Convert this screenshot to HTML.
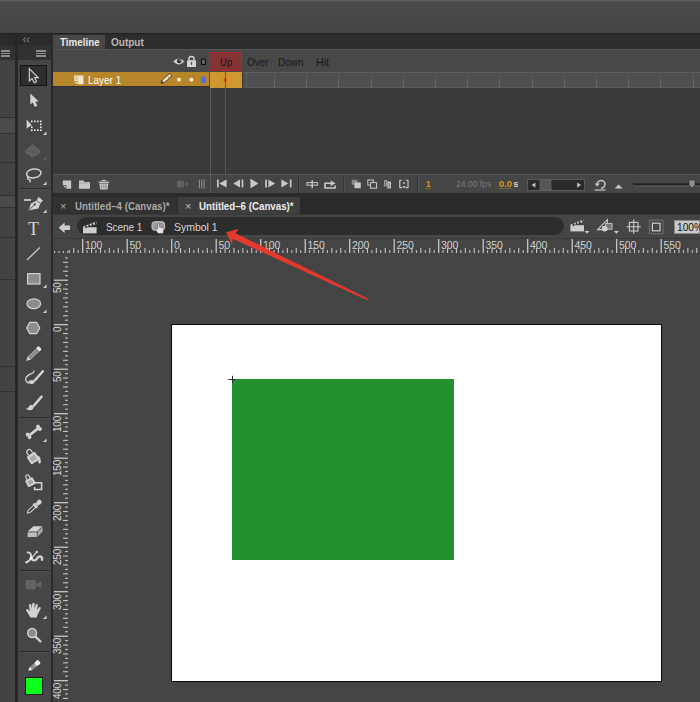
<!DOCTYPE html>
<html><head><meta charset="utf-8">
<style>
*{margin:0;padding:0;box-sizing:border-box}
html,body{width:700px;height:702px;overflow:hidden;background:#444;font-family:"Liberation Sans",sans-serif;}
#app{position:relative;width:700px;height:702px;overflow:hidden;background:#444444}
.abs{position:absolute}
.t{position:absolute;white-space:nowrap;font-family:"Liberation Sans",sans-serif;font-size:11px;line-height:12px;color:#ddd}
svg{position:absolute;overflow:visible}
</style></head><body>
<div id="app">
<div class="abs" style="left:0px;top:0px;width:700px;height:34px;background:linear-gradient(#4b4b4b,#434343);"></div>
<div class="abs" style="left:0px;top:0px;width:700px;height:1px;background:#5c5c5c;"></div>
<div class="abs" style="left:0px;top:1px;width:700px;height:1px;background:#4e4e4e;"></div>
<div class="abs" style="left:0px;top:33.2px;width:700px;height:16.8px;background:#2c2c2c;"></div>
<div class="abs" style="left:0px;top:33.2px;width:700px;height:1.3px;background:#222;"></div>
<div class="abs" style="left:0px;top:34px;width:15px;height:11px;background:#2a2a2a;"></div>
<div class="abs" style="left:0px;top:45px;width:15px;height:15px;background:#313131;"></div>
<div class="abs" style="left:0px;top:60px;width:15px;height:642px;background:#434343;"></div>
<div class="abs" style="left:15px;top:34px;width:3px;height:668px;background:#272727;"></div>
<div class="abs" style="left:18px;top:34px;width:33px;height:11px;background:#2a2a2a;"></div>
<div class="abs" style="left:18px;top:45px;width:33px;height:15px;background:#313131;"></div>
<div class="abs" style="left:18px;top:60px;width:33px;height:642px;background:#464646;"></div>
<div class="abs" style="left:51px;top:34px;width:2px;height:668px;background:#2a2a2a;"></div>
<div class="abs" style="left:53px;top:35px;width:647px;height:14px;background:#2e2e2e;"></div>
<div class="abs" style="left:53px;top:35px;width:52px;height:15px;background:#484848;"></div>
<div class="abs" style="left:105px;top:35px;width:45px;height:14px;background:#2d2d2d;"></div>
<div class="abs" style="left:53px;top:49px;width:647px;height:23px;background:#484848;"></div>
<div class="abs" style="left:53px;top:49.4px;width:647px;height:1px;background:#525252;"></div>
<div class="abs" style="left:53px;top:72px;width:647px;height:102px;background:#3a3a3a;"></div>
<div class="abs" style="left:53px;top:174px;width:647px;height:1px;background:#565656;"></div>
<div class="abs" style="left:53px;top:175px;width:647px;height:18px;background:#454545;"></div>
<div class="abs" style="left:53px;top:193px;width:647px;height:4px;background:#2a2a2a;"></div>
<div class="abs" style="left:53px;top:197px;width:647px;height:17px;background:#2a2a2a;"></div>
<div class="abs" style="left:53px;top:197px;width:124px;height:17px;background:#323232;"></div>
<div class="abs" style="left:178px;top:197px;width:122px;height:17px;background:#3e3e3e;"></div>
<div class="abs" style="left:53px;top:214px;width:647px;height:1px;background:#383838;"></div>
<div class="abs" style="left:53px;top:214.5px;width:647px;height:23.5px;background:#454545;"></div>
<div class="abs" style="left:77px;top:217.3px;width:487px;height:17.8px;background:#2d2d2d;border-radius:9px;"></div>
<div class="abs" style="left:53px;top:238px;width:647px;height:1px;background:#3a3a3a;"></div>
<div class="t" style="left:59.8px;top:36.2px;font-size:10.5px;color:#e8e8e8;font-weight:bold;transform:scaleX(0.9335);transform-origin:0 0;">Timeline</div>
<div class="t" style="left:111px;top:36.2px;font-size:10.5px;color:#b8b8b8;font-weight:bold;transform:scaleX(0.9537);transform-origin:0 0;">Output</div>
<div class="abs" style="left:209px;top:52px;width:33px;height:19px;background:rgba(170,40,40,0.62);border:1px solid #a82a2a;"></div>
<div class="t" style="left:220px;top:56px;font-size:10.5px;color:#1c1010;font-weight:normal;transform:scaleX(0.9090);transform-origin:0 0;">Up</div>
<div class="t" style="left:247.3px;top:56px;font-size:10.5px;color:#161616;font-weight:normal;transform:scaleX(0.9400);transform-origin:0 0;">Over</div>
<div class="t" style="left:277.6px;top:56px;font-size:10.5px;color:#161616;font-weight:normal;transform:scaleX(0.9574);transform-origin:0 0;">Down</div>
<div class="t" style="left:316px;top:56px;font-size:10.5px;color:#161616;font-weight:normal;transform:scaleX(1.0134);transform-origin:0 0;">Hit</div>
<div class="abs" style="left:53px;top:72px;width:157px;height:14px;background:#b68629;"></div>
<div class="abs" style="left:210px;top:72px;width:32px;height:15.5px;background:#d0992f;"></div>
<div class="abs" style="left:243px;top:72px;width:457px;height:15.5px;background:#4f4f4f;"></div>
<div class="abs" style="left:243px;top:72px;width:457px;height:1px;background:#5f5f5f;"></div>
<div class="abs" style="left:243px;top:87px;width:457px;height:1px;background:#5a5a5a;"></div>
<div class="abs" style="left:246px;top:72px;width:1px;height:15px;background:#606060;"></div>
<div class="abs" style="left:274px;top:79px;width:1px;height:8px;background:#686868;"></div>
<div class="abs" style="left:274px;top:73px;width:1px;height:6px;background:#585858;"></div>
<div class="abs" style="left:306px;top:79px;width:1px;height:8px;background:#686868;"></div>
<div class="abs" style="left:306px;top:73px;width:1px;height:6px;background:#585858;"></div>
<div class="abs" style="left:338px;top:79px;width:1px;height:8px;background:#686868;"></div>
<div class="abs" style="left:338px;top:73px;width:1px;height:6px;background:#585858;"></div>
<div class="abs" style="left:371px;top:79px;width:1px;height:8px;background:#686868;"></div>
<div class="abs" style="left:371px;top:73px;width:1px;height:6px;background:#585858;"></div>
<div class="abs" style="left:403px;top:79px;width:1px;height:8px;background:#686868;"></div>
<div class="abs" style="left:403px;top:73px;width:1px;height:6px;background:#585858;"></div>
<div class="abs" style="left:435px;top:79px;width:1px;height:8px;background:#686868;"></div>
<div class="abs" style="left:435px;top:73px;width:1px;height:6px;background:#585858;"></div>
<div class="abs" style="left:467px;top:79px;width:1px;height:8px;background:#686868;"></div>
<div class="abs" style="left:467px;top:73px;width:1px;height:6px;background:#585858;"></div>
<div class="abs" style="left:499px;top:79px;width:1px;height:8px;background:#686868;"></div>
<div class="abs" style="left:499px;top:73px;width:1px;height:6px;background:#585858;"></div>
<div class="abs" style="left:532px;top:79px;width:1px;height:8px;background:#686868;"></div>
<div class="abs" style="left:532px;top:73px;width:1px;height:6px;background:#585858;"></div>
<div class="abs" style="left:564px;top:79px;width:1px;height:8px;background:#686868;"></div>
<div class="abs" style="left:564px;top:73px;width:1px;height:6px;background:#585858;"></div>
<div class="abs" style="left:596px;top:79px;width:1px;height:8px;background:#686868;"></div>
<div class="abs" style="left:596px;top:73px;width:1px;height:6px;background:#585858;"></div>
<div class="abs" style="left:628px;top:79px;width:1px;height:8px;background:#686868;"></div>
<div class="abs" style="left:628px;top:73px;width:1px;height:6px;background:#585858;"></div>
<div class="abs" style="left:660px;top:79px;width:1px;height:8px;background:#686868;"></div>
<div class="abs" style="left:660px;top:73px;width:1px;height:6px;background:#585858;"></div>
<div class="abs" style="left:693px;top:79px;width:1px;height:8px;background:#686868;"></div>
<div class="abs" style="left:693px;top:73px;width:1px;height:6px;background:#585858;"></div>
<div class="abs" style="left:53px;top:86px;width:157px;height:1px;background:#303030;"></div>
<div class="abs" style="left:209px;top:72px;width:1px;height:14px;background:#6a4a14;"></div>
<div class="t" style="left:88.4px;top:74px;font-size:10.5px;color:#ffffff;font-weight:normal;transform:scaleX(0.9473);transform-origin:0 0;">Layer 1</div>
<div class="abs" style="left:210px;top:88px;width:1px;height:105px;background:#5a5a5a;"></div>
<div class="abs" style="left:224.5px;top:71px;width:1.5px;height:104px;background:#d0261c;"></div>
<div class="t" style="left:60px;top:200px;font-size:11px;color:#aaa;font-weight:normal;">&#215;</div>
<div class="t" style="left:75px;top:200px;font-size:10.5px;color:#a8a8a8;font-weight:bold;transform:scaleX(0.9252);transform-origin:0 0;">Untitled&#8211;4 (Canvas)*</div>
<div class="t" style="left:185px;top:200px;font-size:11px;color:#bbb;font-weight:normal;">&#215;</div>
<div class="t" style="left:198.6px;top:200px;font-size:10.5px;color:#ececec;font-weight:bold;transform:scaleX(0.9262);transform-origin:0 0;">Untitled&#8211;6 (Canvas)*</div>
<div class="t" style="left:105.6px;top:221px;font-size:10.5px;color:#d8d8d8;font-weight:normal;transform:scaleX(0.9443);transform-origin:0 0;">Scene 1</div>
<div class="t" style="left:174.3px;top:221px;font-size:10.5px;color:#d8d8d8;font-weight:normal;transform:scaleX(0.9981);transform-origin:0 0;">Symbol 1</div>
<div class="abs" style="left:674px;top:220px;width:26px;height:14px;background:#c9c9c9;border:1px solid #8a8a8a;"></div>
<div class="t" style="left:677px;top:221px;font-size:11px;color:#111;font-weight:normal;transform:scaleX(0.9234);transform-origin:0 0;">100%</div>
<div class="t" style="left:426.2px;top:177.8px;font-size:9.5px;color:#d99a20;font-weight:bold;transform:scaleX(0.8710);transform-origin:0 0;">1</div>
<div class="t" style="left:456px;top:177.8px;font-size:9px;color:#7c7c7c;font-weight:normal;transform:scaleX(0.9514);transform-origin:0 0;">24.00 fps</div>
<div class="t" style="left:498.9px;top:177.8px;font-size:9.5px;color:#d99a20;font-weight:bold;transform:scaleX(0.9846);transform-origin:0 0;">0.0</div>
<div class="t" style="left:513.4px;top:178px;font-size:8.5px;color:#d8d8d8;font-weight:bold;">s</div>
<svg style="left:0px;top:0px;" width="700" height="702" viewBox="0 0 700 702"><rect x="68.75" y="250" width="1.1" height="3" fill="#bdbdbd"/><rect x="73.20" y="248" width="1.1" height="5" fill="#c4c4c4"/><rect x="77.65" y="250" width="1.1" height="3" fill="#bdbdbd"/><rect x="82.10" y="239" width="1.2" height="14" fill="#d0d0d0"/><rect x="86.55" y="250" width="1.1" height="3" fill="#bdbdbd"/><rect x="91.00" y="248" width="1.1" height="5" fill="#c4c4c4"/><rect x="95.45" y="250" width="1.1" height="3" fill="#bdbdbd"/><rect x="99.90" y="248" width="1.1" height="5" fill="#c4c4c4"/><rect x="104.35" y="250" width="1.1" height="3" fill="#bdbdbd"/><rect x="108.80" y="248" width="1.1" height="5" fill="#c4c4c4"/><rect x="113.25" y="250" width="1.1" height="3" fill="#bdbdbd"/><rect x="117.70" y="248" width="1.1" height="5" fill="#c4c4c4"/><rect x="122.15" y="250" width="1.1" height="3" fill="#bdbdbd"/><rect x="126.60" y="239" width="1.2" height="14" fill="#d0d0d0"/><rect x="131.05" y="250" width="1.1" height="3" fill="#bdbdbd"/><rect x="135.50" y="248" width="1.1" height="5" fill="#c4c4c4"/><rect x="139.95" y="250" width="1.1" height="3" fill="#bdbdbd"/><rect x="144.40" y="248" width="1.1" height="5" fill="#c4c4c4"/><rect x="148.85" y="250" width="1.1" height="3" fill="#bdbdbd"/><rect x="153.30" y="248" width="1.1" height="5" fill="#c4c4c4"/><rect x="157.75" y="250" width="1.1" height="3" fill="#bdbdbd"/><rect x="162.20" y="248" width="1.1" height="5" fill="#c4c4c4"/><rect x="166.65" y="250" width="1.1" height="3" fill="#bdbdbd"/><rect x="171.10" y="239" width="1.2" height="14" fill="#d0d0d0"/><rect x="175.55" y="250" width="1.1" height="3" fill="#bdbdbd"/><rect x="180.00" y="248" width="1.1" height="5" fill="#c4c4c4"/><rect x="184.45" y="250" width="1.1" height="3" fill="#bdbdbd"/><rect x="188.90" y="248" width="1.1" height="5" fill="#c4c4c4"/><rect x="193.35" y="250" width="1.1" height="3" fill="#bdbdbd"/><rect x="197.80" y="248" width="1.1" height="5" fill="#c4c4c4"/><rect x="202.25" y="250" width="1.1" height="3" fill="#bdbdbd"/><rect x="206.70" y="248" width="1.1" height="5" fill="#c4c4c4"/><rect x="211.15" y="250" width="1.1" height="3" fill="#bdbdbd"/><rect x="215.60" y="239" width="1.2" height="14" fill="#d0d0d0"/><rect x="220.05" y="250" width="1.1" height="3" fill="#bdbdbd"/><rect x="224.50" y="248" width="1.1" height="5" fill="#c4c4c4"/><rect x="228.95" y="250" width="1.1" height="3" fill="#bdbdbd"/><rect x="233.40" y="248" width="1.1" height="5" fill="#c4c4c4"/><rect x="237.85" y="250" width="1.1" height="3" fill="#bdbdbd"/><rect x="242.30" y="248" width="1.1" height="5" fill="#c4c4c4"/><rect x="246.75" y="250" width="1.1" height="3" fill="#bdbdbd"/><rect x="251.20" y="248" width="1.1" height="5" fill="#c4c4c4"/><rect x="255.65" y="250" width="1.1" height="3" fill="#bdbdbd"/><rect x="260.10" y="239" width="1.2" height="14" fill="#d0d0d0"/><rect x="264.55" y="250" width="1.1" height="3" fill="#bdbdbd"/><rect x="269.00" y="248" width="1.1" height="5" fill="#c4c4c4"/><rect x="273.45" y="250" width="1.1" height="3" fill="#bdbdbd"/><rect x="277.90" y="248" width="1.1" height="5" fill="#c4c4c4"/><rect x="282.35" y="250" width="1.1" height="3" fill="#bdbdbd"/><rect x="286.80" y="248" width="1.1" height="5" fill="#c4c4c4"/><rect x="291.25" y="250" width="1.1" height="3" fill="#bdbdbd"/><rect x="295.70" y="248" width="1.1" height="5" fill="#c4c4c4"/><rect x="300.15" y="250" width="1.1" height="3" fill="#bdbdbd"/><rect x="304.60" y="239" width="1.2" height="14" fill="#d0d0d0"/><rect x="309.05" y="250" width="1.1" height="3" fill="#bdbdbd"/><rect x="313.50" y="248" width="1.1" height="5" fill="#c4c4c4"/><rect x="317.95" y="250" width="1.1" height="3" fill="#bdbdbd"/><rect x="322.40" y="248" width="1.1" height="5" fill="#c4c4c4"/><rect x="326.85" y="250" width="1.1" height="3" fill="#bdbdbd"/><rect x="331.30" y="248" width="1.1" height="5" fill="#c4c4c4"/><rect x="335.75" y="250" width="1.1" height="3" fill="#bdbdbd"/><rect x="340.20" y="248" width="1.1" height="5" fill="#c4c4c4"/><rect x="344.65" y="250" width="1.1" height="3" fill="#bdbdbd"/><rect x="349.10" y="239" width="1.2" height="14" fill="#d0d0d0"/><rect x="353.55" y="250" width="1.1" height="3" fill="#bdbdbd"/><rect x="358.00" y="248" width="1.1" height="5" fill="#c4c4c4"/><rect x="362.45" y="250" width="1.1" height="3" fill="#bdbdbd"/><rect x="366.90" y="248" width="1.1" height="5" fill="#c4c4c4"/><rect x="371.35" y="250" width="1.1" height="3" fill="#bdbdbd"/><rect x="375.80" y="248" width="1.1" height="5" fill="#c4c4c4"/><rect x="380.25" y="250" width="1.1" height="3" fill="#bdbdbd"/><rect x="384.70" y="248" width="1.1" height="5" fill="#c4c4c4"/><rect x="389.15" y="250" width="1.1" height="3" fill="#bdbdbd"/><rect x="393.60" y="239" width="1.2" height="14" fill="#d0d0d0"/><rect x="398.05" y="250" width="1.1" height="3" fill="#bdbdbd"/><rect x="402.50" y="248" width="1.1" height="5" fill="#c4c4c4"/><rect x="406.95" y="250" width="1.1" height="3" fill="#bdbdbd"/><rect x="411.40" y="248" width="1.1" height="5" fill="#c4c4c4"/><rect x="415.85" y="250" width="1.1" height="3" fill="#bdbdbd"/><rect x="420.30" y="248" width="1.1" height="5" fill="#c4c4c4"/><rect x="424.75" y="250" width="1.1" height="3" fill="#bdbdbd"/><rect x="429.20" y="248" width="1.1" height="5" fill="#c4c4c4"/><rect x="433.65" y="250" width="1.1" height="3" fill="#bdbdbd"/><rect x="438.10" y="239" width="1.2" height="14" fill="#d0d0d0"/><rect x="442.55" y="250" width="1.1" height="3" fill="#bdbdbd"/><rect x="447.00" y="248" width="1.1" height="5" fill="#c4c4c4"/><rect x="451.45" y="250" width="1.1" height="3" fill="#bdbdbd"/><rect x="455.90" y="248" width="1.1" height="5" fill="#c4c4c4"/><rect x="460.35" y="250" width="1.1" height="3" fill="#bdbdbd"/><rect x="464.80" y="248" width="1.1" height="5" fill="#c4c4c4"/><rect x="469.25" y="250" width="1.1" height="3" fill="#bdbdbd"/><rect x="473.70" y="248" width="1.1" height="5" fill="#c4c4c4"/><rect x="478.15" y="250" width="1.1" height="3" fill="#bdbdbd"/><rect x="482.60" y="239" width="1.2" height="14" fill="#d0d0d0"/><rect x="487.05" y="250" width="1.1" height="3" fill="#bdbdbd"/><rect x="491.50" y="248" width="1.1" height="5" fill="#c4c4c4"/><rect x="495.95" y="250" width="1.1" height="3" fill="#bdbdbd"/><rect x="500.40" y="248" width="1.1" height="5" fill="#c4c4c4"/><rect x="504.85" y="250" width="1.1" height="3" fill="#bdbdbd"/><rect x="509.30" y="248" width="1.1" height="5" fill="#c4c4c4"/><rect x="513.75" y="250" width="1.1" height="3" fill="#bdbdbd"/><rect x="518.20" y="248" width="1.1" height="5" fill="#c4c4c4"/><rect x="522.65" y="250" width="1.1" height="3" fill="#bdbdbd"/><rect x="527.10" y="239" width="1.2" height="14" fill="#d0d0d0"/><rect x="531.55" y="250" width="1.1" height="3" fill="#bdbdbd"/><rect x="536.00" y="248" width="1.1" height="5" fill="#c4c4c4"/><rect x="540.45" y="250" width="1.1" height="3" fill="#bdbdbd"/><rect x="544.90" y="248" width="1.1" height="5" fill="#c4c4c4"/><rect x="549.35" y="250" width="1.1" height="3" fill="#bdbdbd"/><rect x="553.80" y="248" width="1.1" height="5" fill="#c4c4c4"/><rect x="558.25" y="250" width="1.1" height="3" fill="#bdbdbd"/><rect x="562.70" y="248" width="1.1" height="5" fill="#c4c4c4"/><rect x="567.15" y="250" width="1.1" height="3" fill="#bdbdbd"/><rect x="571.60" y="239" width="1.2" height="14" fill="#d0d0d0"/><rect x="576.05" y="250" width="1.1" height="3" fill="#bdbdbd"/><rect x="580.50" y="248" width="1.1" height="5" fill="#c4c4c4"/><rect x="584.95" y="250" width="1.1" height="3" fill="#bdbdbd"/><rect x="589.40" y="248" width="1.1" height="5" fill="#c4c4c4"/><rect x="593.85" y="250" width="1.1" height="3" fill="#bdbdbd"/><rect x="598.30" y="248" width="1.1" height="5" fill="#c4c4c4"/><rect x="602.75" y="250" width="1.1" height="3" fill="#bdbdbd"/><rect x="607.20" y="248" width="1.1" height="5" fill="#c4c4c4"/><rect x="611.65" y="250" width="1.1" height="3" fill="#bdbdbd"/><rect x="616.10" y="239" width="1.2" height="14" fill="#d0d0d0"/><rect x="620.55" y="250" width="1.1" height="3" fill="#bdbdbd"/><rect x="625.00" y="248" width="1.1" height="5" fill="#c4c4c4"/><rect x="629.45" y="250" width="1.1" height="3" fill="#bdbdbd"/><rect x="633.90" y="248" width="1.1" height="5" fill="#c4c4c4"/><rect x="638.35" y="250" width="1.1" height="3" fill="#bdbdbd"/><rect x="642.80" y="248" width="1.1" height="5" fill="#c4c4c4"/><rect x="647.25" y="250" width="1.1" height="3" fill="#bdbdbd"/><rect x="651.70" y="248" width="1.1" height="5" fill="#c4c4c4"/><rect x="656.15" y="250" width="1.1" height="3" fill="#bdbdbd"/><rect x="660.60" y="239" width="1.2" height="14" fill="#d0d0d0"/><rect x="665.05" y="250" width="1.1" height="3" fill="#bdbdbd"/><rect x="669.50" y="248" width="1.1" height="5" fill="#c4c4c4"/><rect x="673.95" y="250" width="1.1" height="3" fill="#bdbdbd"/><rect x="678.40" y="248" width="1.1" height="5" fill="#c4c4c4"/><rect x="682.85" y="250" width="1.1" height="3" fill="#bdbdbd"/><rect x="687.30" y="248" width="1.1" height="5" fill="#c4c4c4"/><rect x="691.75" y="250" width="1.1" height="3" fill="#bdbdbd"/><rect x="696.20" y="248" width="1.1" height="5" fill="#c4c4c4"/><rect x="700.65" y="250" width="1.1" height="3" fill="#bdbdbd"/><rect x="65" y="257.35" width="3" height="1.1" fill="#bdbdbd"/><rect x="63" y="261.80" width="5" height="1.1" fill="#c4c4c4"/><rect x="65" y="266.25" width="3" height="1.1" fill="#bdbdbd"/><rect x="63" y="270.70" width="5" height="1.1" fill="#c4c4c4"/><rect x="65" y="275.15" width="3" height="1.1" fill="#bdbdbd"/><rect x="54" y="279.60" width="14" height="1.2" fill="#d0d0d0"/><rect x="65" y="284.05" width="3" height="1.1" fill="#bdbdbd"/><rect x="63" y="288.50" width="5" height="1.1" fill="#c4c4c4"/><rect x="65" y="292.95" width="3" height="1.1" fill="#bdbdbd"/><rect x="63" y="297.40" width="5" height="1.1" fill="#c4c4c4"/><rect x="65" y="301.85" width="3" height="1.1" fill="#bdbdbd"/><rect x="63" y="306.30" width="5" height="1.1" fill="#c4c4c4"/><rect x="65" y="310.75" width="3" height="1.1" fill="#bdbdbd"/><rect x="63" y="315.20" width="5" height="1.1" fill="#c4c4c4"/><rect x="65" y="319.65" width="3" height="1.1" fill="#bdbdbd"/><rect x="54" y="324.10" width="14" height="1.2" fill="#d0d0d0"/><rect x="65" y="328.55" width="3" height="1.1" fill="#bdbdbd"/><rect x="63" y="333.00" width="5" height="1.1" fill="#c4c4c4"/><rect x="65" y="337.45" width="3" height="1.1" fill="#bdbdbd"/><rect x="63" y="341.90" width="5" height="1.1" fill="#c4c4c4"/><rect x="65" y="346.35" width="3" height="1.1" fill="#bdbdbd"/><rect x="63" y="350.80" width="5" height="1.1" fill="#c4c4c4"/><rect x="65" y="355.25" width="3" height="1.1" fill="#bdbdbd"/><rect x="63" y="359.70" width="5" height="1.1" fill="#c4c4c4"/><rect x="65" y="364.15" width="3" height="1.1" fill="#bdbdbd"/><rect x="54" y="368.60" width="14" height="1.2" fill="#d0d0d0"/><rect x="65" y="373.05" width="3" height="1.1" fill="#bdbdbd"/><rect x="63" y="377.50" width="5" height="1.1" fill="#c4c4c4"/><rect x="65" y="381.95" width="3" height="1.1" fill="#bdbdbd"/><rect x="63" y="386.40" width="5" height="1.1" fill="#c4c4c4"/><rect x="65" y="390.85" width="3" height="1.1" fill="#bdbdbd"/><rect x="63" y="395.30" width="5" height="1.1" fill="#c4c4c4"/><rect x="65" y="399.75" width="3" height="1.1" fill="#bdbdbd"/><rect x="63" y="404.20" width="5" height="1.1" fill="#c4c4c4"/><rect x="65" y="408.65" width="3" height="1.1" fill="#bdbdbd"/><rect x="54" y="413.10" width="14" height="1.2" fill="#d0d0d0"/><rect x="65" y="417.55" width="3" height="1.1" fill="#bdbdbd"/><rect x="63" y="422.00" width="5" height="1.1" fill="#c4c4c4"/><rect x="65" y="426.45" width="3" height="1.1" fill="#bdbdbd"/><rect x="63" y="430.90" width="5" height="1.1" fill="#c4c4c4"/><rect x="65" y="435.35" width="3" height="1.1" fill="#bdbdbd"/><rect x="63" y="439.80" width="5" height="1.1" fill="#c4c4c4"/><rect x="65" y="444.25" width="3" height="1.1" fill="#bdbdbd"/><rect x="63" y="448.70" width="5" height="1.1" fill="#c4c4c4"/><rect x="65" y="453.15" width="3" height="1.1" fill="#bdbdbd"/><rect x="54" y="457.60" width="14" height="1.2" fill="#d0d0d0"/><rect x="65" y="462.05" width="3" height="1.1" fill="#bdbdbd"/><rect x="63" y="466.50" width="5" height="1.1" fill="#c4c4c4"/><rect x="65" y="470.95" width="3" height="1.1" fill="#bdbdbd"/><rect x="63" y="475.40" width="5" height="1.1" fill="#c4c4c4"/><rect x="65" y="479.85" width="3" height="1.1" fill="#bdbdbd"/><rect x="63" y="484.30" width="5" height="1.1" fill="#c4c4c4"/><rect x="65" y="488.75" width="3" height="1.1" fill="#bdbdbd"/><rect x="63" y="493.20" width="5" height="1.1" fill="#c4c4c4"/><rect x="65" y="497.65" width="3" height="1.1" fill="#bdbdbd"/><rect x="54" y="502.10" width="14" height="1.2" fill="#d0d0d0"/><rect x="65" y="506.55" width="3" height="1.1" fill="#bdbdbd"/><rect x="63" y="511.00" width="5" height="1.1" fill="#c4c4c4"/><rect x="65" y="515.45" width="3" height="1.1" fill="#bdbdbd"/><rect x="63" y="519.90" width="5" height="1.1" fill="#c4c4c4"/><rect x="65" y="524.35" width="3" height="1.1" fill="#bdbdbd"/><rect x="63" y="528.80" width="5" height="1.1" fill="#c4c4c4"/><rect x="65" y="533.25" width="3" height="1.1" fill="#bdbdbd"/><rect x="63" y="537.70" width="5" height="1.1" fill="#c4c4c4"/><rect x="65" y="542.15" width="3" height="1.1" fill="#bdbdbd"/><rect x="54" y="546.60" width="14" height="1.2" fill="#d0d0d0"/><rect x="65" y="551.05" width="3" height="1.1" fill="#bdbdbd"/><rect x="63" y="555.50" width="5" height="1.1" fill="#c4c4c4"/><rect x="65" y="559.95" width="3" height="1.1" fill="#bdbdbd"/><rect x="63" y="564.40" width="5" height="1.1" fill="#c4c4c4"/><rect x="65" y="568.85" width="3" height="1.1" fill="#bdbdbd"/><rect x="63" y="573.30" width="5" height="1.1" fill="#c4c4c4"/><rect x="65" y="577.75" width="3" height="1.1" fill="#bdbdbd"/><rect x="63" y="582.20" width="5" height="1.1" fill="#c4c4c4"/><rect x="65" y="586.65" width="3" height="1.1" fill="#bdbdbd"/><rect x="54" y="591.10" width="14" height="1.2" fill="#d0d0d0"/><rect x="65" y="595.55" width="3" height="1.1" fill="#bdbdbd"/><rect x="63" y="600.00" width="5" height="1.1" fill="#c4c4c4"/><rect x="65" y="604.45" width="3" height="1.1" fill="#bdbdbd"/><rect x="63" y="608.90" width="5" height="1.1" fill="#c4c4c4"/><rect x="65" y="613.35" width="3" height="1.1" fill="#bdbdbd"/><rect x="63" y="617.80" width="5" height="1.1" fill="#c4c4c4"/><rect x="65" y="622.25" width="3" height="1.1" fill="#bdbdbd"/><rect x="63" y="626.70" width="5" height="1.1" fill="#c4c4c4"/><rect x="65" y="631.15" width="3" height="1.1" fill="#bdbdbd"/><rect x="54" y="635.60" width="14" height="1.2" fill="#d0d0d0"/><rect x="65" y="640.05" width="3" height="1.1" fill="#bdbdbd"/><rect x="63" y="644.50" width="5" height="1.1" fill="#c4c4c4"/><rect x="65" y="648.95" width="3" height="1.1" fill="#bdbdbd"/><rect x="63" y="653.40" width="5" height="1.1" fill="#c4c4c4"/><rect x="65" y="657.85" width="3" height="1.1" fill="#bdbdbd"/><rect x="63" y="662.30" width="5" height="1.1" fill="#c4c4c4"/><rect x="65" y="666.75" width="3" height="1.1" fill="#bdbdbd"/><rect x="63" y="671.20" width="5" height="1.1" fill="#c4c4c4"/><rect x="65" y="675.65" width="3" height="1.1" fill="#bdbdbd"/><rect x="54" y="680.10" width="14" height="1.2" fill="#d0d0d0"/><rect x="65" y="684.55" width="3" height="1.1" fill="#bdbdbd"/><rect x="63" y="689.00" width="5" height="1.1" fill="#c4c4c4"/><rect x="65" y="693.45" width="3" height="1.1" fill="#bdbdbd"/><rect x="63" y="697.90" width="5" height="1.1" fill="#c4c4c4"/><rect x="65" y="702.35" width="3" height="1.1" fill="#bdbdbd"/><rect x="54.0" y="251" width="1.2" height="2" fill="#bdbdbd"/><rect x="58.4" y="251" width="1.2" height="2" fill="#bdbdbd"/><rect x="62.8" y="251" width="1.2" height="2" fill="#bdbdbd"/><rect x="67.2" y="251" width="1.2" height="2" fill="#bdbdbd"/></svg>
<div class="t" style="left:85.0px;top:240px;font-size:10.5px;color:#d0d0d0;font-weight:normal;line-height:10px;letter-spacing:-0.1px;">100</div>
<div class="t" style="left:129.5px;top:240px;font-size:10.5px;color:#d0d0d0;font-weight:normal;line-height:10px;letter-spacing:-0.1px;">50</div>
<div class="t" style="left:174.0px;top:240px;font-size:10.5px;color:#d0d0d0;font-weight:normal;line-height:10px;letter-spacing:-0.1px;">0</div>
<div class="t" style="left:218.5px;top:240px;font-size:10.5px;color:#d0d0d0;font-weight:normal;line-height:10px;letter-spacing:-0.1px;">50</div>
<div class="t" style="left:263.0px;top:240px;font-size:10.5px;color:#d0d0d0;font-weight:normal;line-height:10px;letter-spacing:-0.1px;">100</div>
<div class="t" style="left:307.5px;top:240px;font-size:10.5px;color:#d0d0d0;font-weight:normal;line-height:10px;letter-spacing:-0.1px;">150</div>
<div class="t" style="left:352.0px;top:240px;font-size:10.5px;color:#d0d0d0;font-weight:normal;line-height:10px;letter-spacing:-0.1px;">200</div>
<div class="t" style="left:396.5px;top:240px;font-size:10.5px;color:#d0d0d0;font-weight:normal;line-height:10px;letter-spacing:-0.1px;">250</div>
<div class="t" style="left:441.0px;top:240px;font-size:10.5px;color:#d0d0d0;font-weight:normal;line-height:10px;letter-spacing:-0.1px;">300</div>
<div class="t" style="left:485.5px;top:240px;font-size:10.5px;color:#d0d0d0;font-weight:normal;line-height:10px;letter-spacing:-0.1px;">350</div>
<div class="t" style="left:530.0px;top:240px;font-size:10.5px;color:#d0d0d0;font-weight:normal;line-height:10px;letter-spacing:-0.1px;">400</div>
<div class="t" style="left:574.5px;top:240px;font-size:10.5px;color:#d0d0d0;font-weight:normal;line-height:10px;letter-spacing:-0.1px;">450</div>
<div class="t" style="left:619.0px;top:240px;font-size:10.5px;color:#d0d0d0;font-weight:normal;line-height:10px;letter-spacing:-0.1px;">500</div>
<div class="t" style="left:663.5px;top:240px;font-size:10.5px;color:#d0d0d0;font-weight:normal;line-height:10px;letter-spacing:-0.1px;">550</div>
<div class="t" style="left:52.6px;top:292.6px;font-size:10px;line-height:10px;color:#d4d4d4;letter-spacing:-0.2px;transform-origin:0 0;transform:rotate(-90deg);">50</div>
<div class="t" style="left:52.6px;top:331.8px;font-size:10px;line-height:10px;color:#d4d4d4;letter-spacing:-0.2px;transform-origin:0 0;transform:rotate(-90deg);">0</div>
<div class="t" style="left:52.6px;top:381.6px;font-size:10px;line-height:10px;color:#d4d4d4;letter-spacing:-0.2px;transform-origin:0 0;transform:rotate(-90deg);">50</div>
<div class="t" style="left:52.6px;top:431.5px;font-size:10px;line-height:10px;color:#d4d4d4;letter-spacing:-0.2px;transform-origin:0 0;transform:rotate(-90deg);">100</div>
<div class="t" style="left:52.6px;top:476.0px;font-size:10px;line-height:10px;color:#d4d4d4;letter-spacing:-0.2px;transform-origin:0 0;transform:rotate(-90deg);">150</div>
<div class="t" style="left:52.6px;top:520.5px;font-size:10px;line-height:10px;color:#d4d4d4;letter-spacing:-0.2px;transform-origin:0 0;transform:rotate(-90deg);">200</div>
<div class="t" style="left:52.6px;top:565.0px;font-size:10px;line-height:10px;color:#d4d4d4;letter-spacing:-0.2px;transform-origin:0 0;transform:rotate(-90deg);">250</div>
<div class="t" style="left:52.6px;top:609.5px;font-size:10px;line-height:10px;color:#d4d4d4;letter-spacing:-0.2px;transform-origin:0 0;transform:rotate(-90deg);">300</div>
<div class="t" style="left:52.6px;top:654.0px;font-size:10px;line-height:10px;color:#d4d4d4;letter-spacing:-0.2px;transform-origin:0 0;transform:rotate(-90deg);">350</div>
<div class="t" style="left:52.6px;top:698.5px;font-size:10px;line-height:10px;color:#d4d4d4;letter-spacing:-0.2px;transform-origin:0 0;transform:rotate(-90deg);">400</div>
<svg style="left:0px;top:0px;" width="700" height="702" viewBox="0 0 700 702"><path d="M226.70 232.50 L238.27 229.58 L234.54 233.23 L367.79 298.99 L367.41 299.81 L232.23 238.11 L231.75 243.31 Z" fill="#e43a2e" stroke="#e43a2e" stroke-width="0.9" stroke-linejoin="round"/></svg>
<div class="abs" style="left:0px;top:117px;width:15px;height:16px;background:#4b4b4b;"></div>
<div class="abs" style="left:0px;top:117px;width:15px;height:1px;background:#303030;"></div>
<div class="abs" style="left:0px;top:133px;width:15px;height:1px;background:#303030;"></div>
<div class="abs" style="left:0px;top:195px;width:15px;height:12px;background:#4b4b4b;"></div>
<div class="abs" style="left:0px;top:195px;width:15px;height:1px;background:#303030;"></div>
<div class="abs" style="left:0px;top:207px;width:15px;height:1px;background:#303030;"></div>
<div class="abs" style="left:0px;top:162px;width:15px;height:1px;background:#303030;"></div>
<div class="abs" style="left:0px;top:237px;width:15px;height:1px;background:#303030;"></div>
<div class="abs" style="left:0px;top:279px;width:15px;height:1px;background:#303030;"></div>
<div class="abs" style="left:0px;top:366px;width:15px;height:1px;background:#303030;"></div>
<div class="abs" style="left:0px;top:391px;width:15px;height:1px;background:#303030;"></div>
<div class="abs" style="left:1px;top:50.0px;width:9px;height:1.5px;background:#8c8c8c;"></div>
<div class="abs" style="left:1px;top:52.5px;width:9px;height:1.5px;background:#8c8c8c;"></div>
<div class="abs" style="left:1px;top:55.0px;width:9px;height:1.5px;background:#8c8c8c;"></div>
<div class="abs" style="left:36px;top:50.0px;width:10px;height:1.5px;background:#8c8c8c;"></div>
<div class="abs" style="left:36px;top:52.5px;width:10px;height:1.5px;background:#8c8c8c;"></div>
<div class="abs" style="left:36px;top:55.0px;width:10px;height:1.5px;background:#8c8c8c;"></div>
<svg style="left:0px;top:0px;" width="700" height="702" viewBox="0 0 700 702"><path d="M25.5 37.5 l-2 2.3 l2 2.3 M29 37.5 l-2 2.3 l2 2.3" fill="none" stroke="#9a9a9a" stroke-width="1"/></svg>
<div class="abs" style="left:20px;top:65px;width:27px;height:21px;background:#2e2e2e;border:1px solid #141414;"></div>
<div class="abs" style="left:20px;top:188px;width:30px;height:1px;background:#2c2c2c;"></div>
<div class="abs" style="left:20px;top:189px;width:30px;height:1px;background:#4d4d4d;"></div>
<div class="abs" style="left:20px;top:417px;width:30px;height:1px;background:#2c2c2c;"></div>
<div class="abs" style="left:20px;top:418px;width:30px;height:1px;background:#4d4d4d;"></div>
<div class="abs" style="left:20px;top:570px;width:30px;height:1px;background:#2c2c2c;"></div>
<div class="abs" style="left:20px;top:571px;width:30px;height:1px;background:#4d4d4d;"></div>
<div class="abs" style="left:20px;top:651px;width:30px;height:1px;background:#2c2c2c;"></div>
<div class="abs" style="left:20px;top:652px;width:30px;height:1px;background:#4d4d4d;"></div>
<svg style="left:0px;top:0px;" width="700" height="702" viewBox="0 0 700 702"><path d="M29.3 68.6 V81 L32.1 78.7 L34.3 82.9 L36.6 81.8 L34.7 77.6 H38.3 Z" fill="#3a3a3a" stroke="#d2d2d2" stroke-width="1.1" stroke-linejoin="miter"/><path d="M30.3 93.4 V104.6 L32.8 102.6 L34.9 106.9 L37.3 105.7 L35.3 101.6 H38.8 Z" fill="#d2d2d2"/><path d="M26.6 119.6 V128.8 L28.8 127 L31.8 125.2 Z" fill="#d2d2d2"/><rect x="31.0" y="120.6" width="1.6" height="1.6" fill="#f0f0f0"/><rect x="31.0" y="129.4" width="1.6" height="1.6" fill="#f0f0f0"/><rect x="34.0" y="120.6" width="1.6" height="1.6" fill="#f0f0f0"/><rect x="34.0" y="129.4" width="1.6" height="1.6" fill="#f0f0f0"/><rect x="37.0" y="120.6" width="1.6" height="1.6" fill="#f0f0f0"/><rect x="37.0" y="129.4" width="1.6" height="1.6" fill="#f0f0f0"/><rect x="40.0" y="120.6" width="1.6" height="1.6" fill="#f0f0f0"/><rect x="40.0" y="129.4" width="1.6" height="1.6" fill="#f0f0f0"/><rect x="40" y="123.5" width="1.6" height="1.6" fill="#f0f0f0"/><rect x="40" y="126.5" width="1.6" height="1.6" fill="#f0f0f0"/><rect x="31" y="126.5" width="1.6" height="1.6" fill="#f0f0f0"/><path d="M46.5 131.5 V135 H43 Z" fill="#d2d2d2"/><g fill="none" stroke="#646464" stroke-width="1.3"><circle cx="32.7" cy="151" r="4.6" fill="#5a5a5a"/><ellipse cx="32.7" cy="151.5" rx="7.2" ry="3"/><path d="M32.7 144 L39 151 L32.7 158 L26.4 151 Z" stroke-width="0.9"/></g><path d="M46.5 156.5 V160 H43 Z" fill="#5c5c5c"/><g fill="none" stroke="#d2d2d2" stroke-width="1.5" stroke-linecap="round"><ellipse cx="33.8" cy="173.4" rx="7.3" ry="4.4" transform="rotate(-8 33.8 173.4)"/><path d="M28.3 176.6 q-1.6 2 0.6 2.8 q2 0.6 1 2.4"/></g><path d="M46.5 181.5 V185 H43 Z" fill="#d2d2d2"/><path d="M24 200 H31" stroke="#d2d2d2" stroke-width="1.7"/><path d="M28.4 210.6 L31 203.6 L36.6 200.4 L38.6 197 L43 200.6 L40.6 203 L38.4 208.6 Z" fill="#d2d2d2"/><path d="M28.8 210.2 L34.6 204.6" stroke="#444" stroke-width="0.9"/><circle cx="34.8" cy="204.4" r="1.1" fill="#444"/><path d="M36.4 200.6 L40.4 203.4" stroke="#444" stroke-width="0.8"/><path d="M46.5 209.5 V213 H43 Z" fill="#d2d2d2"/><path d="M27 260 L39.8 247.6" stroke="#c4c4c4" stroke-width="1.4"/><rect x="27.6" y="273.6" width="12.4" height="10.4" fill="#8c8c8c" stroke="#d2d2d2" stroke-width="1.2"/><path d="M46.5 284.5 V288 H43 Z" fill="#d2d2d2"/><ellipse cx="33.8" cy="303.8" rx="6.8" ry="4.9" fill="#8c8c8c" stroke="#d2d2d2" stroke-width="1.2"/><path d="M46.5 309.5 V313 H43 Z" fill="#d2d2d2"/><path d="M26.6 328 L29.9 322.4 H36.5 L39.8 328 L36.5 333.6 H29.9 Z" fill="#8c8c8c" stroke="#d2d2d2" stroke-width="1.2"/><g transform="translate(26.4 360.8) rotate(-44)"><path d="M0 0 L4 -2.2 H15 V2.2 H4 Z" fill="#9a9a9a"/><path d="M0 0 L4 -2.2 V2.2 Z" fill="#d2d2d2"/><rect x="15.4" y="-2.4" width="3.6" height="4.8" rx="1" fill="#e6e6e6"/><path d="M4 0 H15" stroke="#666" stroke-width="0.7"/></g><path d="M42.9 371.2 L34.6 380.6" stroke="#d2d2d2" stroke-width="2.4" stroke-linecap="round"/><path d="M27.6 382.6 q1.4 -3 4.6 -2.6 q2.6 0.6 2.2 2.6 q-1.6 3 -6.8 0 Z" fill="#d2d2d2"/><path d="M28 383 q-3.6 -2.6 -1.6 -6 q2 -2.6 5 -3.4 q2.4 -0.8 2.6 -2.6" fill="none" stroke="#d2d2d2" stroke-width="1.3" stroke-linecap="round"/><path d="M41.6 396.6 L33.8 405.8" stroke="#d2d2d2" stroke-width="2.4" stroke-linecap="round"/><path d="M25.8 409 q2.4 -0.6 3.6 -3 q1.6 -1.8 3.6 -0.2 q1.6 1.6 -0.2 3.4 q-2.6 2 -7 -0.2 Z" fill="#d2d2d2"/><g transform="translate(33.8 431.8) rotate(-38)" fill="#d2d2d2"><rect x="-6" y="-1.4" width="12" height="2.8"/><circle cx="-6.6" cy="-1.6" r="1.9"/><circle cx="-6.6" cy="1.6" r="1.9"/><circle cx="6.6" cy="-1.6" r="1.9"/><circle cx="6.6" cy="1.6" r="1.9"/></g><path d="M46.5 438.5 V442 H43 Z" fill="#d2d2d2"/><g transform="translate(33 458) rotate(-32)"><rect x="-5" y="-4.6" width="10" height="9.4" rx="1.6" fill="#d2d2d2"/><rect x="-3" y="-2.2" width="6" height="5.2" rx="1" fill="#a8a8a8"/><path d="M-2.4 -4.6 q-0.6 -5 2.4 -5 q3 0 2.4 5" fill="none" stroke="#d2d2d2" stroke-width="1.3"/></g><path d="M37.6 455.4 q3.2 0.8 3 5.2 q1 2.6 -1 3 q-2 -0.2 -1.2 -2.8 q0.8 -2.6 -0.8 -4 Z" fill="#d2d2d2"/><g transform="translate(30.2 481.8) rotate(-28)"><rect x="-4.2" y="-3.4" width="8.4" height="7.6" rx="1.4" fill="#d2d2d2"/><rect x="-2.4" y="-1.6" width="4.8" height="4" rx="0.8" fill="#a8a8a8"/><path d="M-1.8 -3.4 q-0.4 -4.2 1.8 -4.2 q2.2 0 1.8 4.2" fill="none" stroke="#d2d2d2" stroke-width="1.2"/></g><path d="M35 482.8 H41.6 V489.6 H34.6 V487" fill="none" stroke="#d2d2d2" stroke-width="1.5"/><g transform="translate(27.4 513) rotate(-42.5)"><path d="M0 0 L2.4 -1.5 H10 V1.5 H2.4 Z" fill="none" stroke="#d2d2d2" stroke-width="1"/><rect x="9.6" y="-2.8" width="2.4" height="5.6" fill="#d2d2d2"/><rect x="12" y="-1.8" width="2" height="3.6" fill="#d2d2d2"/><ellipse cx="16" cy="0" rx="2.6" ry="2.3" fill="#d2d2d2"/></g><path d="M27.6 531.6 L33.4 526.2 H42.4 L37 531.6 Z" fill="#d2d2d2"/><path d="M27.6 532.4 H36.8 V537 H27.6 Z" fill="#bdbdbd"/><path d="M37.6 532 L42.6 527 V531.6 L37.6 536.8 Z" fill="#a8a8a8"/><path d="M27.6 552.4 q3.4 0.2 3.6 3.6 q0.2 3.8 -4.6 6.2" fill="none" stroke="#d2d2d2" stroke-width="1.9" stroke-linecap="round"/><path d="M31.4 558.8 q2 2.6 4.8 0.8 q2.4 -3.8 4.6 -3 q1.8 0.8 1.2 3.2" fill="none" stroke="#d2d2d2" stroke-width="2.3" stroke-linecap="round"/><path d="M31.6 558 L36.6 552.2" stroke="#d2d2d2" stroke-width="1.2"/><circle cx="31.2" cy="558" r="1.5" fill="#fafafa"/><circle cx="36.8" cy="552" r="1.2" fill="#d2d2d2"/><circle cx="26.6" cy="562.2" r="1.2" fill="#d2d2d2"/><rect x="25.6" y="580" width="10" height="9.6" rx="1" fill="#646464"/><path d="M36.2 584.8 L41.4 581 V588.6 Z" fill="#646464"/><rect x="35.4" y="583.2" width="1.6" height="3.2" fill="#646464"/><path d="M30.4 617.6 L26.2 610.6 q-0.6 -1.6 1 -1.6 q1.2 0.2 2.6 2.6 L29 605.4 q0 -1.4 1.2 -1.4 q1 0 1.2 1.4 L31.8 609 L32.2 604 q0.2 -1.2 1.2 -1.2 q1.1 0 1.2 1.2 L34.6 609 L35.6 605 q0.4 -1.2 1.3 -1 q1 0.3 0.8 1.5 L37 610.2 L38.8 607.6 q0.8 -1 1.6 -0.4 q0.7 0.6 0.2 1.6 L37.6 614.6 L36.6 617.6 Z" fill="#d2d2d2"/><path d="M46.5 615.5 V619 H43 Z" fill="#d2d2d2"/><circle cx="32.1" cy="633" r="4.4" fill="#8a8a8a" stroke="#d2d2d2" stroke-width="1.5"/><path d="M35.4 636.6 L40.4 641.4" stroke="#d2d2d2" stroke-width="2.2" stroke-linecap="round"/><g transform="translate(28.4 670.6) rotate(-40)"><path d="M0 0 L3.4 -2 H10 V2 H3.4 Z" fill="#a0a0a0"/><path d="M0 0 L3.4 -2 V2 Z" fill="#e8e8e8"/><rect x="9.4" y="-2.4" width="5" height="4.8" rx="1.6" fill="#f0f0f0"/><path d="M4.6 -2 V2 M6.4 -2 V2" stroke="#666" stroke-width="0.7"/></g></svg>
<div class="t" style="left:28px;top:218.5px;font-family:'Liberation Serif',serif;font-size:18px;line-height:20px;color:#d2d2d2;">T</div>
<div class="abs" style="left:25px;top:677px;width:18px;height:18px;background:#0cff1c;border:1px solid #1c1c1c;"></div>
<svg style="left:0px;top:0px;" width="700" height="702" viewBox="0 0 700 702"><path d="M173.2 61.6 Q178.8 55.6 184.4 61.6 Q178.8 67.2 173.2 61.6 Z" fill="#cfcfcf"/><circle cx="179.2" cy="61" r="2.3" fill="#333"/><circle cx="180" cy="60.2" r="0.8" fill="#bbb"/><rect x="187" y="60.2" width="9" height="6.8" rx="0.6" fill="#d4d4d4"/><path d="M189 60.4 V58.6 Q189 56.4 191.5 56.4 Q194 56.4 194 58.6 V60.4" fill="none" stroke="#d4d4d4" stroke-width="1.5"/><circle cx="191.5" cy="62.8" r="0.9" fill="#444"/><rect x="191.1" y="63" width="0.8" height="2" fill="#444"/><rect x="201.6" y="59.2" width="3.8" height="5.2" fill="#6a6a6a" stroke="#0c0c0c" stroke-width="1"/><path d="M74 75.4 H83.4 V84.3 H77.6 V81 H74 Z" fill="#f4e6c6"/><path d="M74.2 81.8 H76.8 V84.3 Z" fill="#f4e6c6"/><rect x="74" y="75.4" width="4.2" height="4.6" fill="#e2cfa6"/><g transform="translate(161.2 83.2) rotate(-41.5)"><path d="M0 0 L3 -1.7 H12.6 V1.7 H3 Z" fill="#f6e8c8" stroke="#2a1c08" stroke-width="0.7"/><path d="M0 0 L2 -1.1 V1.1 Z" fill="#2a1c08"/><path d="M9.8 -1.7 V1.7" stroke="#8a6a30" stroke-width="0.8"/></g><circle cx="179" cy="79.7" r="1.9" fill="#fff6dc"/><circle cx="191.4" cy="79.7" r="1.9" fill="#fff6dc"/><rect x="201.4" y="76.6" width="4.6" height="6.4" rx="1.6" fill="#4a6cff"/><path d="M225.2 77.4 L227.2 80 L225.2 82.6 L223.2 80 Z" fill="#b83c10"/><path d="M62.8 180.4 H71.2 V188.8 H66.4 V185 H62.8 Z" fill="#c8c8c8"/><path d="M63.2 185.8 H65.6 V188.6 Z" fill="#c8c8c8"/><path d="M79 180.4 H83.4 L84.6 182 H90 V188.8 H79 Z" fill="#c8c8c8"/><path d="M79 183 H90" stroke="#9a9a9a" stroke-width="0.7"/><path d="M99.4 183.4 H108.4 L107.6 189.6 H100.2 Z" fill="#c8c8c8"/><rect x="98.6" y="181.6" width="10.6" height="1.3" fill="#c8c8c8"/><path d="M102 181.6 V180.4 H105.8 V181.6" fill="none" stroke="#c8c8c8" stroke-width="1"/><path d="M101.8 184.4 V188.6 M103.9 184.4 V188.6 M106 184.4 V188.6" stroke="#777" stroke-width="0.8"/><rect x="177" y="180.8" width="7" height="6.8" rx="0.8" fill="#606060"/><path d="M184.4 184.2 L188 181.4 V187 Z" fill="#606060"/><path d="M199.4 179.4 V188.6 M201.8 179.4 V188.6 M204.2 179.4 V188.6" stroke="#8c8c8c" stroke-width="1.1"/><rect x="217" y="179.6" width="1.7" height="7.8" fill="#c8c8c8"/><path d="M219.2 183.5 L226.6 179.6 V187.4 Z" fill="#c8c8c8"/><path d="M233.2 183.5 L240 179.6 V187.4 Z" fill="#c8c8c8"/><rect x="241.6" y="179.6" width="1.7" height="7.8" fill="#c8c8c8"/><path d="M258.4 183.5 L250.4 178.7 V188.3 Z" fill="#c8c8c8"/><rect x="265.2" y="179.6" width="1.7" height="7.8" fill="#c8c8c8"/><path d="M275.2 183.5 L268.4 179.6 V187.4 Z" fill="#c8c8c8"/><path d="M288.4 183.5 L281.4 179.6 V187.4 Z" fill="#c8c8c8"/><rect x="289.8" y="179.6" width="1.7" height="7.8" fill="#c8c8c8"/><rect x="298" y="176" width="1" height="17" fill="#323232"/><rect x="299" y="176" width="1" height="17" fill="#505050"/><rect x="343" y="176" width="1" height="17" fill="#323232"/><rect x="344" y="176" width="1" height="17" fill="#505050"/><rect x="417" y="176" width="1" height="17" fill="#323232"/><rect x="418" y="176" width="1" height="17" fill="#505050"/><rect x="307" y="182.6" width="10.4" height="2.6" fill="none" stroke="#c8c8c8" stroke-width="1"/><path d="M312.2 180 V188.2" stroke="#c8c8c8" stroke-width="1.4"/><path d="M331 183.2 H325 V188 H335 V185.6" fill="none" stroke="#c8c8c8" stroke-width="1.6"/><path d="M330.6 180.4 L335.6 183.2 L330.6 186 Z" fill="#c8c8c8"/><rect x="351.8" y="179.8" width="5.6" height="5" fill="#8a8a8a"/><rect x="354.4" y="182.4" width="6.4" height="5.8" fill="#c8c8c8"/><rect x="367.8" y="180" width="5.4" height="5" fill="none" stroke="#c8c8c8" stroke-width="1"/><rect x="370.6" y="182.6" width="6" height="5.6" fill="#454545" stroke="#c8c8c8" stroke-width="1"/><rect x="384" y="180" width="3.4" height="6.4" fill="#9a9a9a"/><rect x="387.4" y="181.6" width="3.6" height="6.8" fill="#c8c8c8"/><path d="M385.7 181 V185.4 M389.2 183 V187.4" stroke="#555" stroke-width="0.8"/><path d="M402 180.2 H399.8 V187.6 H402 M405.8 180.2 H408 V187.6 H405.8" fill="none" stroke="#c8c8c8" stroke-width="1.1"/><circle cx="404" cy="183" r="0.9" fill="#c8c8c8"/><path d="M402.2 186.2 H406 L404.1 188.6 Z" fill="#c8c8c8"/><rect x="527.5" y="179.5" width="57" height="11" fill="#2b2b2b" stroke="#5a5a5a" stroke-width="1"/><rect x="540" y="180" width="11" height="10" fill="#565656" stroke="#6a6a6a" stroke-width="0.6"/><path d="M531.6 185 L535.4 182.4 V187.6 Z" fill="#c4c4c4"/><path d="M581 185 L577.2 182.4 V187.6 Z" fill="#c4c4c4"/><path d="M597.2 184.6 A3.9 3.9 0 1 1 601 188.2" fill="none" stroke="#c8c8c8" stroke-width="1.5"/><path d="M594.6 183.4 H599.8 L597.2 186.6 Z" fill="#c8c8c8"/><path d="M594.6 190 H605.4" stroke="#c8c8c8" stroke-width="1.2"/><path d="M614.6 188.4 L618.6 184.6 L622.6 188.4 Z" fill="#c8c8c8"/><rect x="633" y="183.4" width="67" height="2" fill="#1e1e1e"/><rect x="633" y="185.4" width="67" height="1" fill="#5a5a5a"/><path d="M689 180 H695 V185 L692 188 L689 185 Z" fill="#8e8e8e" stroke="#2a2a2a" stroke-width="0.6"/><path d="M425.6 188.6 H431.4 M498.6 188.6 H512.2" stroke="#b8841c" stroke-width="1" stroke-dasharray="1 1"/></svg>
<svg style="left:0px;top:0px;" width="700" height="702" viewBox="0 0 700 702"><path d="M58.6 227.8 L64.6 222.6 V225.6 H70 V230 H64.6 V233 Z" fill="#cdcdcd"/><rect x="83" y="227.2" width="13.6" height="6.2" fill="#cdcdcd"/><path d="M83 226.4 L96 221.6 L96.8 224 L83.8 227.4 Z" fill="#cdcdcd"/><path d="M84.8 225.6 l1.3 -0.5 l1 2.6 l-1.3 0.5 Z" fill="#2e2e2e"/><path d="M88.0 224.4 l1.3 -0.5 l1 2.6 l-1.3 0.5 Z" fill="#2e2e2e"/><path d="M91.2 223.3 l1.3 -0.5 l1 2.6 l-1.3 0.5 Z" fill="#2e2e2e"/><path d="M94.4 222.1 l1.3 -0.5 l1 2.6 l-1.3 0.5 Z" fill="#2e2e2e"/><rect x="152" y="221.8" width="12.6" height="8.4" rx="2.4" fill="#9a9a9a" stroke="#cdcdcd" stroke-width="1"/><path d="M157.6 224.6 q0 -1 0.9 -1 q0.9 0 0.9 1 V227 l3.6 0.8 q1 0.4 0.8 1.6 L163 233.4 H158 L155.6 229.6 q-0.4 -1 0.6 -1.2 l1.4 0.8 Z" fill="#e6e6e6" stroke="#444" stroke-width="0.5"/><rect x="570.4" y="225.2" width="13.6" height="6.2" fill="#cdcdcd"/><path d="M570.4 224.4 L583.4 219.6 L584.1999999999999 222 L571.1999999999999 225.4 Z" fill="#cdcdcd"/><path d="M572.2 223.6 l1.3 -0.5 l1 2.6 l-1.3 0.5 Z" fill="#2e2e2e"/><path d="M575.4 222.4 l1.3 -0.5 l1 2.6 l-1.3 0.5 Z" fill="#2e2e2e"/><path d="M578.6 221.3 l1.3 -0.5 l1 2.6 l-1.3 0.5 Z" fill="#2e2e2e"/><path d="M581.8 220.1 l1.3 -0.5 l1 2.6 l-1.3 0.5 Z" fill="#2e2e2e"/><path d="M584.6 231.0 H589.4 L587 233.79999999999998 Z" fill="#cdcdcd"/><path d="M597.6 229.6 L607.4 219.6 V229.6 Z" fill="none" stroke="#cdcdcd" stroke-width="1.1"/><rect x="605.6" y="223.6" width="6.4" height="5.6" fill="#777" stroke="#cdcdcd" stroke-width="0.9"/><circle cx="604.6" cy="228.6" r="2.9" fill="#cdcdcd"/><path d="M614.0 231.0 H618.8 L616.4 233.79999999999998 Z" fill="#cdcdcd"/><rect x="629.4" y="222.4" width="8.6" height="8.6" fill="none" stroke="#cdcdcd" stroke-width="1.1"/><path d="M633.7 219.6 V233.8 M626.6 226.7 H640.8" stroke="#cdcdcd" stroke-width="1.1"/><rect x="649.4" y="220.2" width="13.6" height="13.6" fill="none" stroke="#9a9a9a" stroke-width="1" stroke-dasharray="1 1"/><rect x="652.4" y="223.2" width="7.6" height="7.6" fill="none" stroke="#cdcdcd" stroke-width="1.2"/></svg>
<div class="abs" style="left:171px;top:324px;width:491px;height:358px;background:#fff;border:1px solid #0a0a0a;"></div>
<div class="abs" style="left:232px;top:379px;width:222px;height:181px;background:#21922d;"></div>
<svg style="left:0px;top:0px;" width="700" height="702" viewBox="0 0 700 702"><path d="M228.4 379.5 H235.6 M232.5 375.8 V383.2" stroke="#2a2a2a" stroke-width="1"/></svg>
</div>
</body></html>
